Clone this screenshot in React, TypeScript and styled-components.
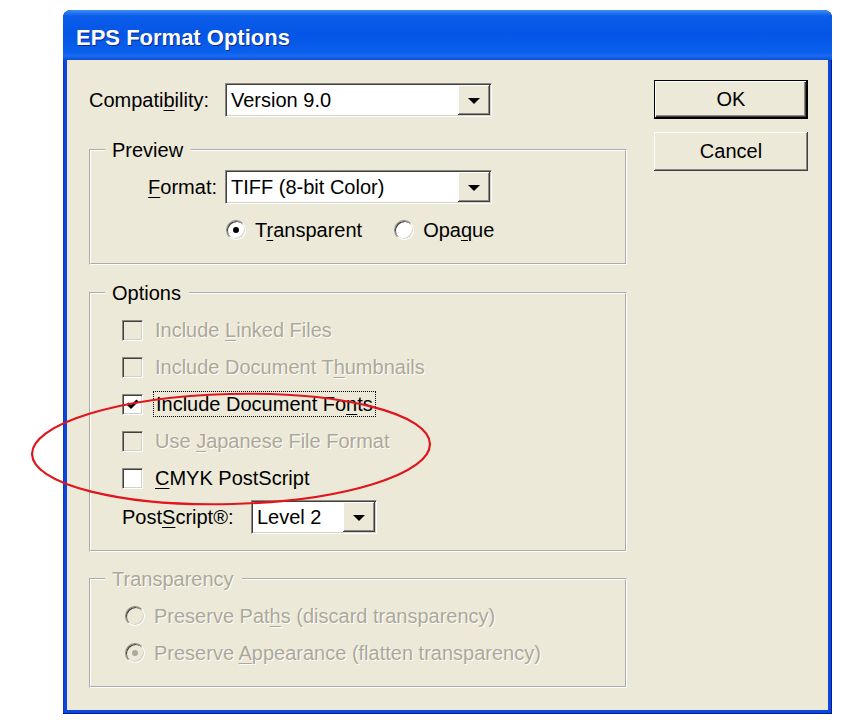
import styled, { createGlobalStyle } from "styled-components";

const GlobalStyle = createGlobalStyle`
  html, body {
    margin: 0;
    padding: 0;
    background: #fff;
  }
  body {
    font-family: "Liberation Sans", Arial, sans-serif;
  }
`;

const FACE = "#ece9d8";
const DISABLED = "#aca899";

const Page = styled.div`
  position: relative;
  width: 850px;
  height: 727px;
  padding: 10px 0 0 63px;
  box-sizing: border-box;
`;

const Window = styled.div`
  width: 769px;
  height: 704px;
  display: flex;
  flex-direction: column;
  background: #0a48dc;
  border-radius: 8px 8px 0 0;
  box-shadow: inset -1px -1px #00189a, inset 1px 0 #0b3cc0;
  overflow: hidden;
`;

const TitleBar = styled.div`
  height: 50px;
  box-sizing: border-box;
  display: flex;
  align-items: center;
  padding: 6px 13px 0;
  background: linear-gradient(
    to bottom,
    #3d8ff7 0%,
    #0b5ce9 12%,
    #0556e6 50%,
    #0a5fec 84%,
    #1a69f0 92%,
    #0a4ed6 100%
  );
  color: #fff;
  font-weight: bold;
  font-size: 22px;
  text-shadow: 1px 1px #0a2a90;
`;

const Client = styled.div`
  flex: 1;
  margin: 0 4px 4px 4px;
  background: ${FACE};
  padding: 20px 20px 0 22px;
  display: grid;
  grid-template-columns: 538px 154px;
  column-gap: 27px;
  align-items: start;
`;

const LeftColumn = styled.div`
  display: flex;
  flex-direction: column;
  padding-top: 3px;
`;

const RightColumn = styled.div`
  display: flex;
  flex-direction: column;
  gap: 13px;
`;

const Text = styled.span<{ $disabled?: boolean }>`
  font-size: 20px;
  line-height: 22px;
  white-space: nowrap;
  color: ${(p) => (p.$disabled ? DISABLED : "#000")};
  text-shadow: ${(p) => (p.$disabled ? "1px 1px #fff" : "none")};
`;

const Key = styled.u`
  text-decoration-thickness: 1px;
  text-underline-offset: 3px;
`;

const FocusText = styled(Text)`
  outline: 1px dotted #000;
  outline-offset: 1px;
  padding: 0 1px;
`;

const FieldRow = styled.div<{ $labelWidth: number; $pull?: number }>`
  display: grid;
  grid-template-columns: ${(p) => p.$labelWidth}px auto;
  column-gap: 8px;
  align-items: center;
  justify-items: start;
  margin-top: ${(p) => -(p.$pull ?? 0)}px;
`;

const RightLabel = styled(Text)`
  justify-self: end;
`;

const SelectBox = styled.div<{ $width: number }>`
  width: ${(p) => p.$width}px;
  height: 34px;
  box-sizing: border-box;
  display: flex;
  align-items: stretch;
  background: #fff;
  border: 1px solid;
  border-color: #8c8a80 #fff #fff #8c8a80;
  box-shadow: inset 1px 1px #404040, inset -1px -1px #d4d0c8;
  padding: 1px;
`;

const SelectValue = styled(Text)`
  flex: 1;
  display: flex;
  align-items: center;
  padding-left: 4px;
`;

const ArrowButton = styled.div`
  width: 32px;
  display: flex;
  align-items: center;
  justify-content: center;
  background: ${FACE};
  box-shadow: inset -1px -1px #404040, inset 1px 1px #fff, inset -2px -2px #8c8a80;

  &::after {
    content: "";
    border-left: 6px solid transparent;
    border-right: 6px solid transparent;
    border-top: 6px solid #000;
    margin-top: 1px;
  }
`;

const Group = styled.fieldset<{ $gap: number }>`
  margin: ${(p) => p.$gap}px 0 0 0;
  padding: 0;
  min-width: 0;
  border: 2px groove #fff;
`;

const Legend = styled.legend<{ $disabled?: boolean }>`
  margin-left: 14px;
  padding: 0 8px 0 7px;
  font-size: 20px;
  line-height: 22px;
  color: ${(p) => (p.$disabled ? DISABLED : "#000")};
  text-shadow: ${(p) => (p.$disabled ? "1px 1px #fff" : "none")};
`;

const GroupBody = styled.div<{ $pad: string; $gap: number }>`
  padding: ${(p) => p.$pad};
  display: flex;
  flex-direction: column;
  gap: ${(p) => p.$gap}px;
`;

const RadioRow = styled.div<{ $indent?: number }>`
  display: flex;
  align-items: center;
  height: 22px;
  padding-left: ${(p) => p.$indent ?? 0}px;
`;

const RadioItem = styled.label`
  display: flex;
  align-items: center;
  gap: 9px;
  margin-right: 32px;
`;

const Radio = styled.span<{ $checked?: boolean; $disabled?: boolean }>`
  width: 20px;
  height: 20px;
  box-sizing: border-box;
  border-radius: 50%;
  display: flex;
  align-items: center;
  justify-content: center;
  background: ${(p) => (p.$disabled ? FACE : "#fff")};
  border: 1px solid;
  border-color: #8c8a80 #fff #fff #8c8a80;
  box-shadow: inset 1px 1px #404040, inset -1px -1px #d4d0c8;

  &::after {
    content: "";
    width: 6px;
    height: 6px;
    border-radius: 50%;
    background: ${(p) => (p.$disabled ? DISABLED : "#000")};
    display: ${(p) => (p.$checked ? "block" : "none")};
  }
`;

const CheckRow = styled.label`
  display: flex;
  align-items: center;
  gap: 12px;
  height: 22px;
`;

const CheckBox = styled.span<{ $disabled?: boolean }>`
  width: 21px;
  height: 21px;
  box-sizing: border-box;
  display: flex;
  align-items: center;
  justify-content: center;
  background: ${(p) => (p.$disabled ? FACE : "#fff")};
  border: 1px solid;
  border-color: #8c8a80 #fff #fff #8c8a80;
  box-shadow: inset 1px 1px #404040, inset -1px -1px #d4d0c8;
`;

const Button = styled.button<{ $default?: boolean }>`
  width: 154px;
  height: 39px;
  padding: 0;
  font-family: "Liberation Sans", Arial, sans-serif;
  font-size: 20px;
  color: #000;
  background: ${FACE};
  border: ${(p) => (p.$default ? "1px solid #000" : "none")};
  box-shadow: ${(p) =>
    p.$default
      ? "inset -1px -1px #000, inset 1px 1px #fff, inset -2px -2px #404040, inset -3px -3px #8c8a80"
      : "inset -1px -1px #404040, inset 1px 1px #fff, inset -2px -2px #8c8a80"};
`;

const Annotation = styled.svg`
  position: absolute;
  left: 0;
  top: 0;
  pointer-events: none;
`;

const Check = () => (
  <svg width="13" height="11" viewBox="0 0 13 11">
    <path d="M1.5 4.5 L5 8 L11.5 1.5" stroke="#000" strokeWidth="3" fill="none" />
  </svg>
);

const Select = ({ value, width }: { value: string; width: number }) => (
  <SelectBox $width={width}>
    <SelectValue>{value}</SelectValue>
    <ArrowButton />
  </SelectBox>
);

export default function App() {
  return (
    <>
      <GlobalStyle />
      <Page>
        <Window>
          <TitleBar>EPS Format Options</TitleBar>
          <Client>
            <LeftColumn>
              <FieldRow $labelWidth={128}>
                <Text>
                  Compati<Key>b</Key>ility:
                </Text>
                <Select value="Version 9.0" width={267} />
              </FieldRow>

              <Group $gap={22}>
                <Legend>Preview</Legend>
                <GroupBody $pad="9px 0 22px 0" $gap={15}>
                  <FieldRow $labelWidth={126}>
                    <RightLabel>
                      <Key>F</Key>ormat:
                    </RightLabel>
                    <Select value="TIFF (8-bit Color)" width={267} />
                  </FieldRow>
                  <RadioRow $indent={135}>
                    <RadioItem>
                      <Radio $checked />
                      <Text>
                        T<Key>r</Key>ansparent
                      </Text>
                    </RadioItem>
                    <RadioItem>
                      <Radio />
                      <Text>
                        Opa<Key>q</Key>ue
                      </Text>
                    </RadioItem>
                  </RadioRow>
                </GroupBody>
              </Group>

              <Group $gap={17}>
                <Legend>Options</Legend>
                <GroupBody $pad="15px 0 16px 31px" $gap={15}>
                  <CheckRow>
                    <CheckBox $disabled />
                    <Text $disabled>
                      Include <Key>L</Key>inked Files
                    </Text>
                  </CheckRow>
                  <CheckRow>
                    <CheckBox $disabled />
                    <Text $disabled>
                      Include Document T<Key>h</Key>umbnails
                    </Text>
                  </CheckRow>
                  <CheckRow>
                    <CheckBox>
                      <Check />
                    </CheckBox>
                    <FocusText>
                      Include Document Fo<Key>n</Key>ts
                    </FocusText>
                  </CheckRow>
                  <CheckRow>
                    <CheckBox $disabled />
                    <Text $disabled>
                      Use <Key>J</Key>apanese File Format
                    </Text>
                  </CheckRow>
                  <CheckRow>
                    <CheckBox />
                    <Text>
                      <Key>C</Key>MYK PostScript
                    </Text>
                  </CheckRow>
                  <FieldRow $labelWidth={121} $pull={4}>
                    <Text>
                      Post<Key>S</Key>cript®:
                    </Text>
                    <Select value="Level 2" width={126} />
                  </FieldRow>
                </GroupBody>
              </Group>

              <Group $gap={16}>
                <Legend $disabled>Transparency</Legend>
                <GroupBody $pad="15px 0 22px 34px" $gap={15}>
                  <RadioRow>
                    <RadioItem>
                      <Radio $disabled />
                      <Text $disabled>
                        Preserve Pat<Key>h</Key>s (discard transparency)
                      </Text>
                    </RadioItem>
                  </RadioRow>
                  <RadioRow>
                    <RadioItem>
                      <Radio $disabled $checked />
                      <Text $disabled>
                        Preserve <Key>A</Key>ppearance (flatten transparency)
                      </Text>
                    </RadioItem>
                  </RadioRow>
                </GroupBody>
              </Group>
            </LeftColumn>

            <RightColumn>
              <Button $default>OK</Button>
              <Button>Cancel</Button>
            </RightColumn>
          </Client>
        </Window>

        <Annotation width="850" height="727">
          <ellipse
            cx="231"
            cy="449"
            rx="199"
            ry="55"
            transform="rotate(-1.5 231 449)"
            fill="none"
            stroke="#e0151d"
            strokeWidth="2.2"
          />
        </Annotation>
      </Page>
    </>
  );
}
